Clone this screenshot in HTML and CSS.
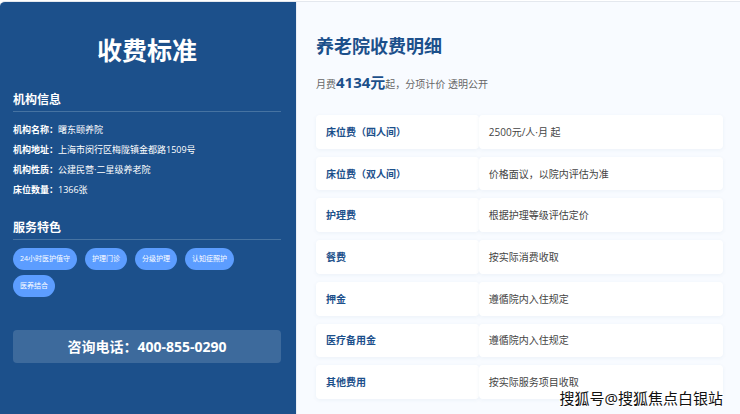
FILE: index.html
```
<!DOCTYPE html>
<html lang="zh-CN">
 <head>
  <meta charset="utf-8">
  <meta name="viewport" content="width=device-width, initial-scale=1">
  <title>养老院收费标准</title>
  <link rel="stylesheet" href="styles.css">
 </head>
 <body>
  <div class="container">
   <aside class="sidebar">
    <h1>收费标准</h1>
    <h3>机构信息</h3>
    <ul class="info-list">
     <li><strong>机构名称：</strong>曙东颐养院</li>
     <li><strong>机构地址：</strong>上海市闵行区梅陇镇金都路1509号</li>
     <li><strong>机构性质：</strong>公建民营·二星级养老院</li>
     <li><strong>床位数量：</strong>1366张</li>
    </ul>
    <h3>服务特色</h3>
    <div class="tags">
     <span class="tag">24小时医护值守</span>
     <span class="tag">护理门诊</span>
     <span class="tag">分级护理</span>
     <span class="tag">认知症照护</span>
     <span class="tag">医养结合</span>
    </div>
    <div class="phone">咨询电话：400-855-0290</div>
   </aside>
   <main class="content">
    <h2>养老院收费明细</h2>
    <p class="summary">月费<span class="price">4134元</span>起，分项计价 透明公开</p>
    <table class="fee-table">
     <tr>
      <th scope="row">床位费（四人间）</th>
      <td>2500元/人·月 起</td>
     </tr>
     <tr>
      <th scope="row">床位费（双人间）</th>
      <td>价格面议，以院内评估为准</td>
     </tr>
     <tr>
      <th scope="row">护理费</th>
      <td>根据护理等级评估定价</td>
     </tr>
     <tr>
      <th scope="row">餐费</th>
      <td>按实际消费收取</td>
     </tr>
     <tr>
      <th scope="row">押金</th>
      <td>遵循院内入住规定</td>
     </tr>
     <tr>
      <th scope="row">医疗备用金</th>
      <td>遵循院内入住规定</td>
     </tr>
     <tr>
      <th scope="row">其他费用</th>
      <td>按实际服务项目收取</td>
     </tr>
    </table>
   </main>
  </div>
  <div class="watermark">搜狐号@搜狐焦点白银站</div>
 </body>
</html>
```

FILE: styles.css
```
* {
    box-sizing: border-box;
    margin: 0;
    padding: 0;
}

body {
    font-family: "Open Sans", "Noto Sans CJK SC", sans-serif;
    font-size: 10px;
    line-height: 20px;
    color: #444;
    background-color: #fff;
    padding-top: 1px;
}

.container {
    display: flex;
    min-height: calc(100vh - 1px);
    background-color: #f8fbff;
    border-top: 1px solid #e4e8ee;
    border-radius: 5px 0 0 0;
    overflow: hidden;
}

/* left column */
.sidebar {
    width: 40%;
    padding: 32px 15px 20px 13px;
    background-color: #1c508b;
    color: #fff;
}

.sidebar h1 {
    font-size: 25px;
    line-height: 32px;
    text-align: center;
    margin-bottom: 25px;
}

.sidebar h3 {
    font-size: 12px;
    line-height: 18px;
    padding-bottom: 2px;
    border-bottom: 1px solid #4673a2;
    margin-bottom: 8px;
}

.info-list {
    list-style: none;
    font-size: 9px;
    margin-bottom: 19px;
}

.tags {
    display: flex;
    flex-wrap: wrap;
    gap: 5px 8px;
    margin-bottom: 33px;
}

.tag {
    font-size: 7px;
    line-height: 22px;
    padding: 0 7px;
    border-radius: 11px;
    background-color: #5c9dff;
}

.phone {
    font-size: 14px;
    font-weight: bold;
    line-height: 33px;
    text-align: center;
    border-radius: 4px;
    background-color: rgba(255, 255, 255, 0.15);
}

/* right column */
.content {
    flex: 1;
    padding: 32px 17px 6px 19px;
    border-left: 1px solid #e9eef5;
}

.content h2 {
    font-size: 18px;
    line-height: 24px;
    color: #1c508b;
    margin-bottom: 16px;
}

.summary {
    color: #666;
    margin-bottom: 13px;
}

.price {
    font-size: 15px;
    font-weight: bold;
    line-height: 16px;
    color: #1c508b;
}

.fee-table {
    width: 100%;
    height: 300px;
    border-collapse: separate;
    border-spacing: 0 8px;
}

.fee-table th,
.fee-table td {
    padding: 0 10px;
    text-align: left;
    background-color: #fff;
    border-radius: 4px;
    box-shadow: 0 1px 4px rgba(28, 80, 139, 0.06);
}

.fee-table th {
    width: 40%;
    color: #1c508b;
}

.watermark {
    position: absolute;
    right: 17px;
    bottom: 6px;
    font-size: 15px;
    color: #111;
    text-shadow: 1px 1px 0 #fff, -1px -1px 0 #fff, 1px -1px 0 #fff, -1px 1px 0 #fff;
}
```
